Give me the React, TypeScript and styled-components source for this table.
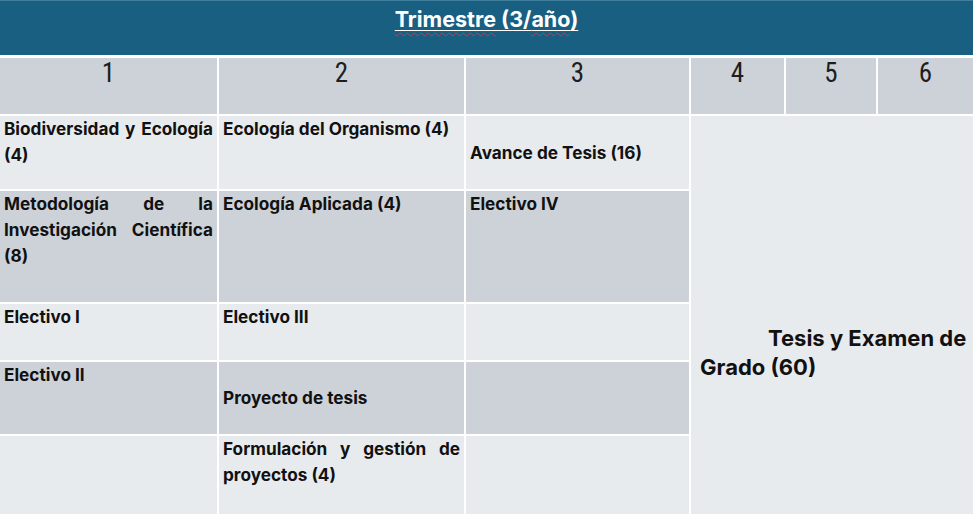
import React from "react";
import styled, { createGlobalStyle } from "styled-components";

const Global = createGlobalStyle`
  html, body { margin: 0; padding: 0; background: #ffffff; }
  body { font-family: Inter, "Open Sans", "Liberation Sans", sans-serif; }
`;

const Page = styled.div`
  width: 973px;
  height: 514px;
  background: #ffffff;
  display: flex;
  flex-direction: column;
  overflow: hidden;
`;

const TitleBar = styled.div`
  height: 55px;
  background: #195f82;
  border-top: 1px solid #3f7d9c;
  box-sizing: border-box;
  margin-bottom: 3px;
  display: flex;
  justify-content: center;
  align-items: flex-start;
  padding-top: 4px;
`;

const Title = styled.h1`
  margin: 0;
  font-family: Inter, "Open Sans", sans-serif;
  font-weight: 700;
  font-size: 21.5px;
  line-height: 28px;
  color: #ffffff;
  text-decoration: underline;
  text-decoration-color: #ffffff;
  text-underline-offset: 3px;
  text-decoration-thickness: 1px;
`;

const Misspelled = styled.span`
  text-decoration: underline wavy #d23a3a;
  text-decoration-thickness: 1px;
  text-underline-offset: 5px;
`;

const Grid = styled.div`
  display: grid;
  grid-template-columns: 217px 245px 223px 93px 90px 95px;
  grid-template-rows: 56px 73px 111px 56px 72px 78px;
  gap: 2px;
`;

const HeadCell = styled.div`
  background: #cdd2d9;
  text-align: center;
  font-family: "Liberation Sans Narrow", "Roboto Condensed", Roboto, sans-serif;
  font-size: 27px;
  line-height: 30px;
  color: #1e1e1e;
  font-weight: 400;
`;

const Cell = styled.div<{ $tone: "light" | "dark"; $middle?: boolean }>`
  background: ${(p) => (p.$tone === "light" ? "#e8ebee" : "#cdd2d9")};
  display: flex;
  flex-direction: column;
  justify-content: ${(p) => (p.$middle ? "center" : "flex-start")};
  padding: 0 4px 0 4px;
  box-sizing: border-box;
  font-weight: 700;
  font-size: 17.2px;
  line-height: 26px;
  color: #111111;
  text-align: justify;
`;

const ThesisCell = styled.div`
  grid-column: 4 / span 3;
  grid-row: 2 / span 5;
  background: #e8ebee;
  display: flex;
  flex-direction: column;
  justify-content: center;
  padding: 76px 8px 0 9px;
  font-weight: 700;
  font-size: 22px;
  line-height: 29px;
  color: #111111;
  white-space: nowrap;
`;

const ThesisFirst = styled.span`
  padding-left: 68px;
`;

type CellDef = { text?: string; middle?: boolean };

const rows: { tone: "light" | "dark"; cells: CellDef[] }[] = [
  {
    tone: "light",
    cells: [
      { text: "Biodiversidad y Ecología (4)" },
      { text: "Ecología del Organismo (4)" },
      { text: "Avance de Tesis (16)", middle: true },
    ],
  },
  {
    tone: "dark",
    cells: [
      { text: "Metodología de la Investigación Científica (8)" },
      { text: "Ecología Aplicada (4)" },
      { text: "Electivo IV" },
    ],
  },
  {
    tone: "light",
    cells: [{ text: "Electivo I" }, { text: "Electivo III" }, {}],
  },
  {
    tone: "dark",
    cells: [{ text: "Electivo II" }, { text: "Proyecto de tesis", middle: true }, {}],
  },
  {
    tone: "light",
    cells: [{}, { text: "Formulación y gestión de proyectos (4)" }, {}],
  },
];

export default function App() {
  return (
    <Page>
      <Global />
      <TitleBar>
        <Title>
          <Misspelled>Trimestre</Misspelled> (3/<Misspelled>año</Misspelled>)
        </Title>
      </TitleBar>
      <Grid>
        {["1", "2", "3", "4", "5", "6"].map((n) => (
          <HeadCell key={n}>{n}</HeadCell>
        ))}
        {rows.map((r, ri) => (
          <React.Fragment key={ri}>
            {r.cells.map((c, ci) => (
              <Cell key={ci} $tone={r.tone} $middle={c.middle}>
                {c.text && <div>{c.text}</div>}
              </Cell>
            ))}
            {ri === 0 && (
              <ThesisCell>
                <ThesisFirst>Tesis y Examen de</ThesisFirst>
                <span>Grado (60)</span>
              </ThesisCell>
            )}
          </React.Fragment>
        ))}
      </Grid>
    </Page>
  );
}
